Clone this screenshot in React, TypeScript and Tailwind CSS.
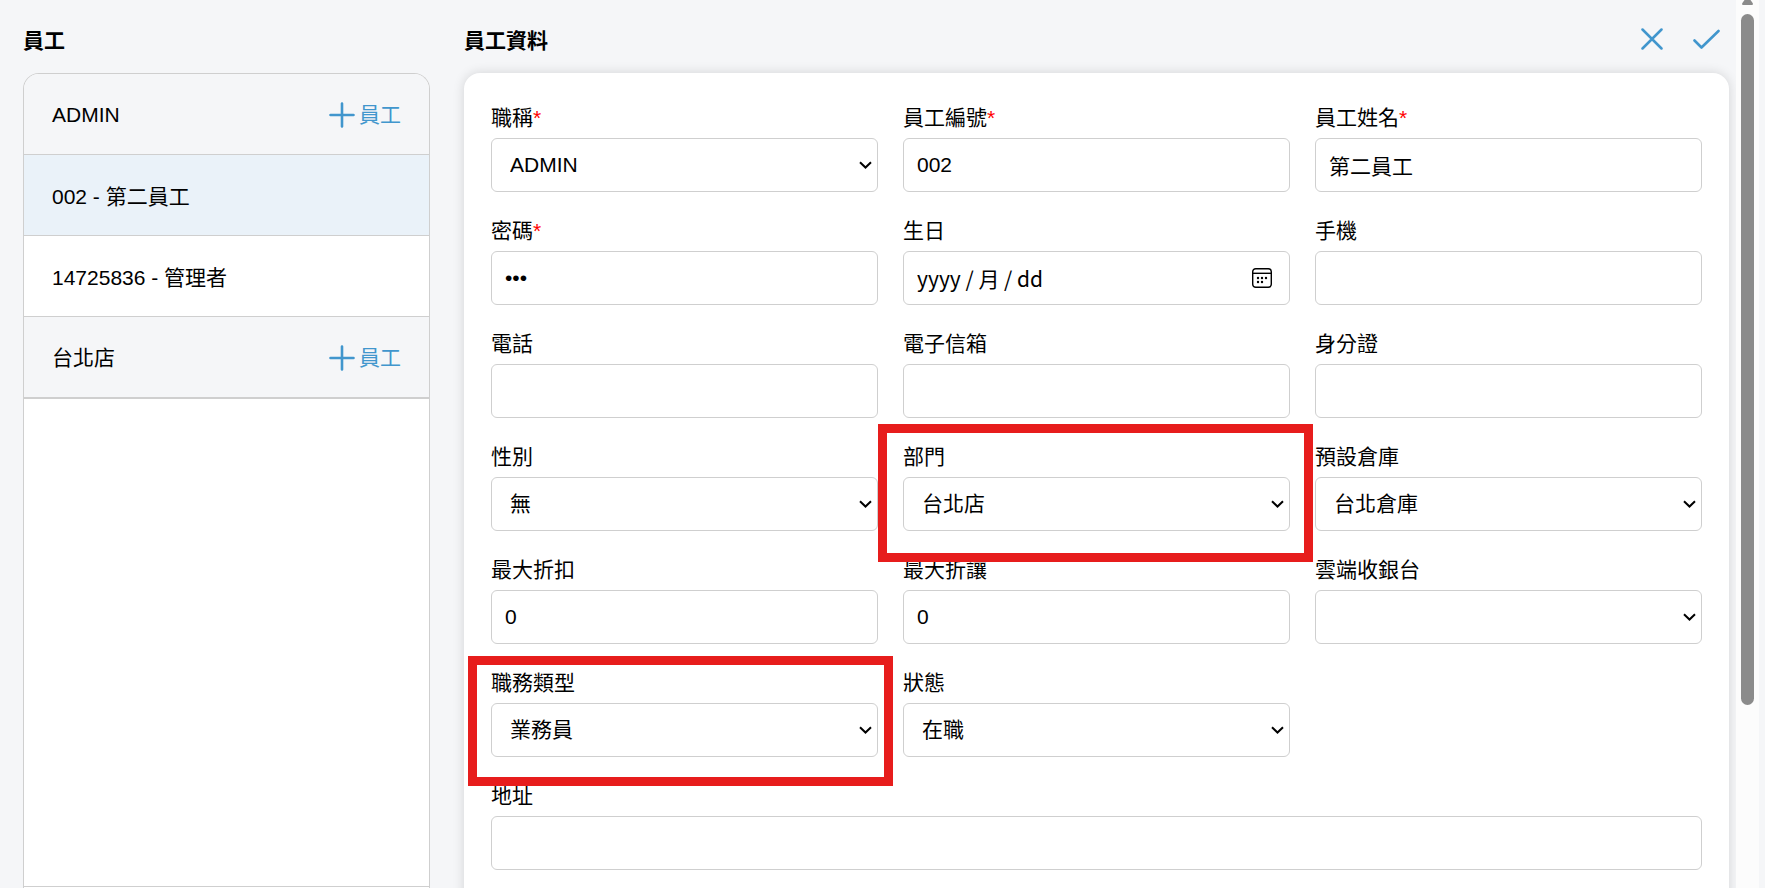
import React, { useState } from 'react';

type Field = {
  id: string;
  label: string;
  kind: 'text' | 'number' | 'password' | 'date' | 'select';
  value?: string;
  required?: boolean;
  wide?: boolean;
  mark?: string;
};

const fields: Field[] = [
  { id: 'title', label: '職稱', kind: 'select', value: 'ADMIN', required: true },
  { id: 'code', label: '員工編號', kind: 'text', value: '002', required: true },
  { id: 'name', label: '員工姓名', kind: 'text', value: '第二員工', required: true },
  { id: 'password', label: '密碼', kind: 'password', value: '002', required: true },
  { id: 'birthday', label: '生日', kind: 'date' },
  { id: 'mobile', label: '手機', kind: 'text' },
  { id: 'phone', label: '電話', kind: 'text' },
  { id: 'email', label: '電子信箱', kind: 'text' },
  { id: 'idNumber', label: '身分證', kind: 'text' },
  { id: 'gender', label: '性別', kind: 'select', value: '無' },
  {
    id: 'department',
    label: '部門',
    kind: 'select',
    value: '台北店',
    mark: '-top-[17px] -bottom-[31px] -left-[25px] -right-[23px]',
  },
  { id: 'warehouse', label: '預設倉庫', kind: 'select', value: '台北倉庫' },
  { id: 'maxDiscount', label: '最大折扣', kind: 'number', value: '0' },
  { id: 'maxAllowance', label: '最大折讓', kind: 'number', value: '0' },
  { id: 'register', label: '雲端收銀台', kind: 'select', value: '' },
  {
    id: 'jobType',
    label: '職務類型',
    kind: 'select',
    value: '業務員',
    mark: '-top-[11px] -bottom-[29px] -left-[23px] -right-[15px]',
  },
  { id: 'status', label: '狀態', kind: 'select', value: '在職' },
  { id: 'address', label: '地址', kind: 'text', wide: true },
];

const groups = [
  { name: 'ADMIN', employees: ['002 - 第二員工', '14725836 - 管理者'] },
  { name: '台北店', employees: [] },
];

const boxClass = 'h-[54px] w-full rounded-md border border-[#cfcfcf] bg-white text-black outline-none focus:border-[#4196cd]';

function CalendarIcon() {
  return (
    <svg width="20" height="20" viewBox="0 0 20 20" fill="none" stroke="black" strokeWidth="1.4">
      <rect x="0.7" y="0.7" width="18.6" height="18.6" rx="3" />
      <path d="M1 5.3h18" />
      <g fill="black" stroke="none">
        <circle cx="6" cy="10" r="1.2" />
        <circle cx="10" cy="10" r="1.2" />
        <circle cx="14" cy="10" r="1.2" />
        <circle cx="6" cy="14" r="1.2" />
        <circle cx="10" cy="14" r="1.2" />
      </g>
    </svg>
  );
}

function FormField({ field }: { field: Field }) {
  const [value, setValue] = useState(field.value ?? '');

  let control;
  if (field.kind === 'select') {
    control = (
      <div className="grid items-center">
        <select
          id={field.id}
          className={`${boxClass} col-start-1 row-start-1 appearance-none pr-8 pl-[18px]`}
          value={value}
          onChange={(event) => setValue(event.target.value)}
        >
          <option value={field.value}>{field.value}</option>
        </select>
        <svg
          className="pointer-events-none col-start-1 row-start-1 mr-1.5 justify-self-end"
          width="13"
          height="8"
          viewBox="0 0 13 8"
          fill="none"
          stroke="black"
          strokeWidth="2"
        >
          <path d="M1 1.2l5.5 5.3L12 1.2" />
        </svg>
      </div>
    );
  } else if (field.kind === 'date') {
    control = (
      <div className="grid items-center">
        <input
          id={field.id}
          type="text"
          placeholder="yyyy / 月 / dd"
          className={`${boxClass} col-start-1 row-start-1 pr-12 pl-[13px] font-['Noto_Sans_CJK_TC',sans-serif] placeholder:text-black`}
          value={value}
          onChange={(event) => setValue(event.target.value)}
        />
        <button type="button" aria-label="選擇日期" className="col-start-1 row-start-1 mr-[18px] justify-self-end">
          <CalendarIcon />
        </button>
      </div>
    );
  } else {
    control = (
      <input
        id={field.id}
        type={field.kind}
        className={`${boxClass} px-[13px]`}
        value={value}
        onChange={(event) => setValue(event.target.value)}
      />
    );
  }

  return (
    <div className={`relative flex flex-col gap-1 ${field.wide ? 'col-span-3' : ''}`}>
      <label htmlFor={field.id} className="h-8 leading-8 whitespace-nowrap">
        {field.label}
        {field.required ? <span className="text-[#ff0000]">*</span> : null}
      </label>
      {control}
      {field.mark ? (
        <div className={`pointer-events-none absolute z-10 border-[9px] border-[#e71d1c] ${field.mark}`} />
      ) : null}
    </div>
  );
}

function Sidebar() {
  const [selected, setSelected] = useState('002 - 第二員工');

  return (
    <aside className="flex w-[407px] shrink-0 flex-col">
      <h2 className="flex h-[73px] items-center pt-2 font-bold">員工</h2>
      <div className="flex flex-1 flex-col overflow-hidden rounded-t-2xl border-x border-t border-[#cfcfcf] bg-white pb-px">
        {groups.map((group) => (
          <React.Fragment key={group.name}>
            <div className="flex h-[81px] items-center justify-between border-b border-[#cfcfcf] bg-[#f5f6f8] px-7 pt-0.5">
              <span>{group.name}</span>
              <button type="button" className="flex items-center gap-1 text-[#4196cd]">
                <svg width="26" height="26" viewBox="0 0 26 26" fill="none" stroke="currentColor" strokeWidth="2.6" strokeLinecap="round">
                  <path d="M13 1.5v23M1.5 13h23" />
                </svg>
                員工
              </button>
            </div>
            {group.employees.map((employee) => (
              <button
                key={employee}
                type="button"
                onClick={() => setSelected(employee)}
                className={`h-[81px] border-b border-[#cfcfcf] px-7 pt-1 text-left ${employee === selected ? 'bg-[#eaf2f9]' : 'bg-white'}`}
              >
                {employee}
              </button>
            ))}
          </React.Fragment>
        ))}
        <div className="flex-1 border-y border-[#cfcfcf]" />
      </div>
    </aside>
  );
}

function Scrollbar() {
  return (
    <div className="mr-1.5 flex w-[23px] shrink-0 flex-col items-center bg-[#fcfcfc]">
      <svg width="11" height="5" viewBox="0 0 11 5" fill="#8b8b8b">
        <path d="M2.5 0h6L11 3.5Q11 5 10 5H1Q0 5 0 3.5z" />
      </svg>
      <div className="mt-[9px] h-7/9 w-[13px] rounded-full bg-[#8b8b8b]" />
    </div>
  );
}

export default function App() {
  return (
    <div className="flex h-screen overflow-hidden bg-[#f5f6f8] pl-[23px] font-['Liberation_Sans','Noto_Sans_CJK_TC',sans-serif] text-[21px] text-black">
      <Sidebar />
      <main className="flex min-w-0 flex-1 flex-col overflow-hidden pr-[7px] pl-[34px]">
        <header className="flex h-[73px] shrink-0 items-center justify-between pt-2 pr-[9px]">
          <h2 className="font-bold">員工資料</h2>
          <div className="flex items-center gap-[30px] pb-1 text-[#4196cd]">
            <button type="button" aria-label="取消">
              <svg width="22" height="22" viewBox="0 0 22 22" fill="none" stroke="currentColor" strokeWidth="2.5" strokeLinecap="round">
                <path d="M1.5 1.5l19 19M20.5 1.5l-19 19" />
              </svg>
            </button>
            <button type="button" aria-label="儲存">
              <svg width="27" height="22" viewBox="0 0 27 22" fill="none" stroke="currentColor" strokeWidth="2.6" strokeLinecap="round" strokeLinejoin="round">
                <path d="M1.5 12.5l7 7L25.5 3" />
              </svg>
            </button>
          </div>
        </header>
        <form className="grid shrink-0 grid-cols-3 gap-x-[25px] gap-y-[23px] rounded-t-2xl bg-white px-[27px] pt-[29px] pb-12 shadow-[0_0_12px_rgba(0,0,0,0.14)]">
          {fields.map((field) => (
            <FormField key={field.id} field={field} />
          ))}
        </form>
      </main>
      <Scrollbar />
    </div>
  );
}
